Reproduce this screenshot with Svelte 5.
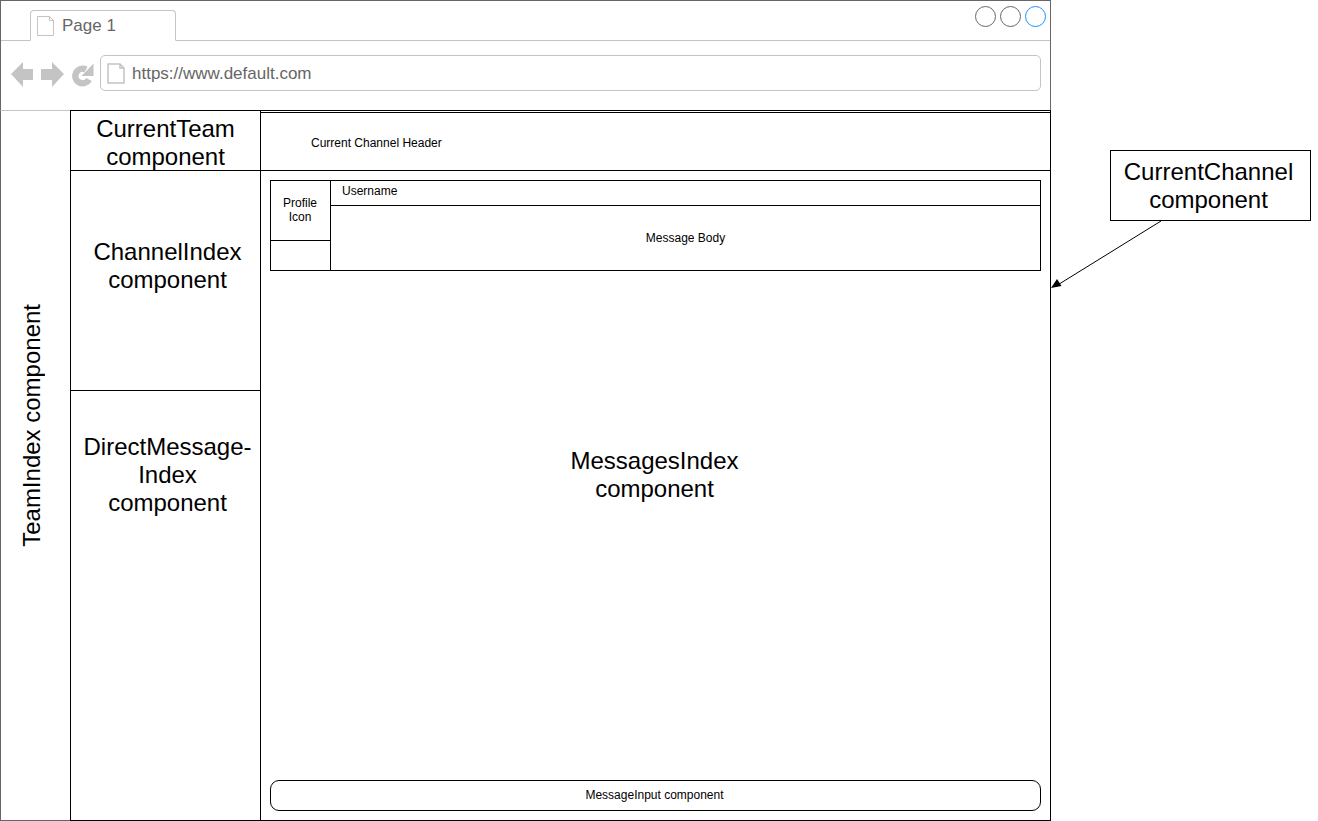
<script lang="ts">
    const windowButtons = ['plain', 'plain', 'active']
</script>

<div class="page">
    <div class="frame">
        <div class="chrome">
            <div class="tabs">
                <div class="tab">
                    <svg class="doc" width="17" height="20" viewBox="0 0 17 20">
                        <path d="M.5.5h12l4 4v15H.5z M12.5.5v4h4" fill="#fff" stroke="#c4c4c4" />
                    </svg>
                    <span>Page 1</span>
                </div>
                <div class="buttons">
                    {#each windowButtons as kind}
                        <span class="circle {kind}"></span>
                    {/each}
                </div>
            </div>
            <div class="toolbar">
                <svg class="nav" width="84" height="26" viewBox="0 0 84 26">
                    <path d="M0 12 12 0v7h10v11H12v7z" fill="#c4c4c4" />
                    <path d="M53 12 41 0v7H30v11h11v7z" fill="#c4c4c4" />
                    <path d="M78 17.500A7.300 7.300 0 1 1 75 7.500" fill="none" stroke="#c4c4c4" stroke-width="6.500" />
                    <path d="M82.500 1.500V14H70.500z" fill="#c4c4c4" />
                </svg>
                <div class="address">
                    <svg width="18" height="21" viewBox="0 0 18 21">
                        <path d="M1 1h12l4 4v15H1z M13 1v4h4" fill="#fff" stroke="#c4c4c4" stroke-width="1.500" />
                    </svg>
                    <span>https://www.default.com</span>
                </div>
            </div>
        </div>

        <div class="content">
            <div class="team-index"><span>TeamIndex component</span></div>
            <div class="sidebar">
                <div class="current-team">CurrentTeam<br />component</div>
                <div class="channels">ChannelIndex<br />component</div>
                <div class="direct">DirectMessage-<br />Index<br />component</div>
            </div>
            <div class="channel">
                <div class="channel-header">Current Channel Header</div>
                <div class="messages">
                    <div class="message">
                        <div class="avatar-col">
                            <div class="avatar">Profile<br />Icon</div>
                        </div>
                        <div class="message-col">
                            <div class="username">Username</div>
                            <div class="message-body">Message Body</div>
                        </div>
                    </div>
                    <div class="messages-label">MessagesIndex<br />component</div>
                    <div class="message-input">MessageInput component</div>
                </div>
            </div>
        </div>
    </div>

    <div class="callout">CurrentChannel<br />component</div>

    <svg class="arrow" width="120" height="74" viewBox="0 0 120 74">
        <path d="M110 0 5 65" fill="none" stroke="#000" />
        <path d="M0 67 10.500 65 6 58z" fill="#000" />
    </svg>
</div>

<style>
    :global(body) {
        background: #fff;
    }

    .page {
        position: relative;
        display: flex;
        align-items: flex-start;
        width: 1318px;
        height: 821px;
        overflow: hidden;
        font-family: 'Liberation Sans', Arial, sans-serif;
        color: #000;
    }

    .page * {
        box-sizing: border-box;
    }

    .frame {
        display: flex;
        flex-direction: column;
        width: 1051px;
        height: 821px;
        flex-shrink: 0;
    }

    .chrome {
        height: 110px;
        border: 1px solid #666;
        border-bottom: none;
        flex-shrink: 0;
    }

    .tabs {
        display: flex;
        justify-content: space-between;
        height: 40px;
        padding: 9px 0 0 29px;
        border-bottom: 1px solid #c4c4c4;
    }

    .tab {
        display: flex;
        align-items: center;
        gap: 8px;
        width: 146px;
        height: 31px;
        margin-bottom: -1px;
        padding: 0 0 0 6px;
        border: 1px solid #c4c4c4;
        border-bottom: 1px solid #fff;
        border-radius: 4px 4px 0 0;
        background: #fff;
        font-size: 17px;
        color: #666;
    }

    .buttons {
        display: flex;
        gap: 4px;
        margin: -4px 4px 0 0;
    }

    .circle {
        width: 21px;
        height: 21px;
        border-radius: 50%;
        border: 1px solid #666;
    }

    .circle.active {
        border-color: #1e90ff;
    }

    .toolbar {
        display: flex;
        align-items: flex-start;
        height: 69px;
        padding: 14px 9px 0 10px;
    }

    .nav {
        margin: 7px 5px 0 0;
        flex-shrink: 0;
    }

    .address {
        display: flex;
        align-items: center;
        gap: 7px;
        flex: 1;
        height: 36px;
        padding: 0 0 0 6px;
        border: 1px solid #c4c4c4;
        border-radius: 5px;
        font-size: 17px;
        color: #666;
    }

    .address span {
        padding-top: 2px;
    }

    .content {
        display: flex;
        flex: 1;
        min-height: 0;
    }

    .team-index {
        display: flex;
        align-items: center;
        justify-content: center;
        width: 70px;
        padding-bottom: 80px;
        border-left: 1px solid #666;
        border-top: 1px solid #c4c4c4;
        border-bottom: 1px solid #666;
        flex-shrink: 0;
        font-size: 24px;
    }

    .team-index span {
        writing-mode: vertical-rl;
        transform: rotate(180deg);
        white-space: nowrap;
        margin-right: 8px;
    }

    .sidebar {
        display: flex;
        flex-direction: column;
        width: 190px;
        border: 1px solid #000;
        border-right: none;
        flex-shrink: 0;
        font-size: 24px;
        line-height: 28px;
        text-align: center;
    }

    .current-team {
        height: 60px;
        padding: 4px 0 0 0;
        border-bottom: 1px solid #000;
    }

    .channels {
        height: 220px;
        padding: 67px 0 0 4px;
        border-bottom: 1px solid #000;
    }

    .direct {
        flex: 1;
        padding: 42px 0 0 4px;
    }

    .channel {
        display: flex;
        flex-direction: column;
        flex: 1;
        min-width: 0;
        border: 1px solid #000;
        box-shadow: inset 0 1px 0 #fff, inset 0 2px 0 #000;
        font-size: 12px;
    }

    .channel-header {
        display: flex;
        align-items: center;
        height: 60px;
        padding: 4px 0 0 50px;
        border-bottom: 1px solid #000;
        flex-shrink: 0;
    }

    .messages {
        display: flex;
        flex-direction: column;
        flex: 1;
        min-height: 0;
        padding: 9px;
    }

    .message {
        display: flex;
        height: 91px;
        border: 1px solid #000;
        flex-shrink: 0;
    }

    .avatar-col {
        width: 60px;
        border-right: 1px solid #000;
    }

    .avatar {
        display: flex;
        align-items: center;
        justify-content: center;
        height: 60px;
        padding: 0 1px 2px 0;
        border-bottom: 1px solid #000;
        line-height: 14px;
        text-align: center;
    }

    .message-col {
        display: flex;
        flex-direction: column;
        flex: 1;
    }

    .username {
        height: 25px;
        padding: 3px 0 0 11px;
        border-bottom: 1px solid #000;
        line-height: 14px;
    }

    .message-body {
        display: flex;
        align-items: center;
        justify-content: center;
        flex: 1;
    }

    .messages-label {
        display: flex;
        align-items: center;
        justify-content: center;
        flex: 1;
        padding: 0 2px 101px 0;
        font-size: 24px;
        line-height: 28px;
        text-align: center;
    }

    .message-input {
        display: flex;
        align-items: center;
        justify-content: center;
        height: 31px;
        padding: 0 2px 2px 0;
        border: 1px solid #000;
        border-radius: 9px;
        flex-shrink: 0;
    }

    .callout {
        width: 201px;
        height: 71px;
        margin: 150px 0 0 59px;
        padding: 7px 4px 0 0;
        border: 1px solid #000;
        flex-shrink: 0;
        font-size: 24px;
        line-height: 28px;
        text-align: center;
    }

    .arrow {
        position: absolute;
        left: 1051px;
        top: 221px;
    }
</style>
